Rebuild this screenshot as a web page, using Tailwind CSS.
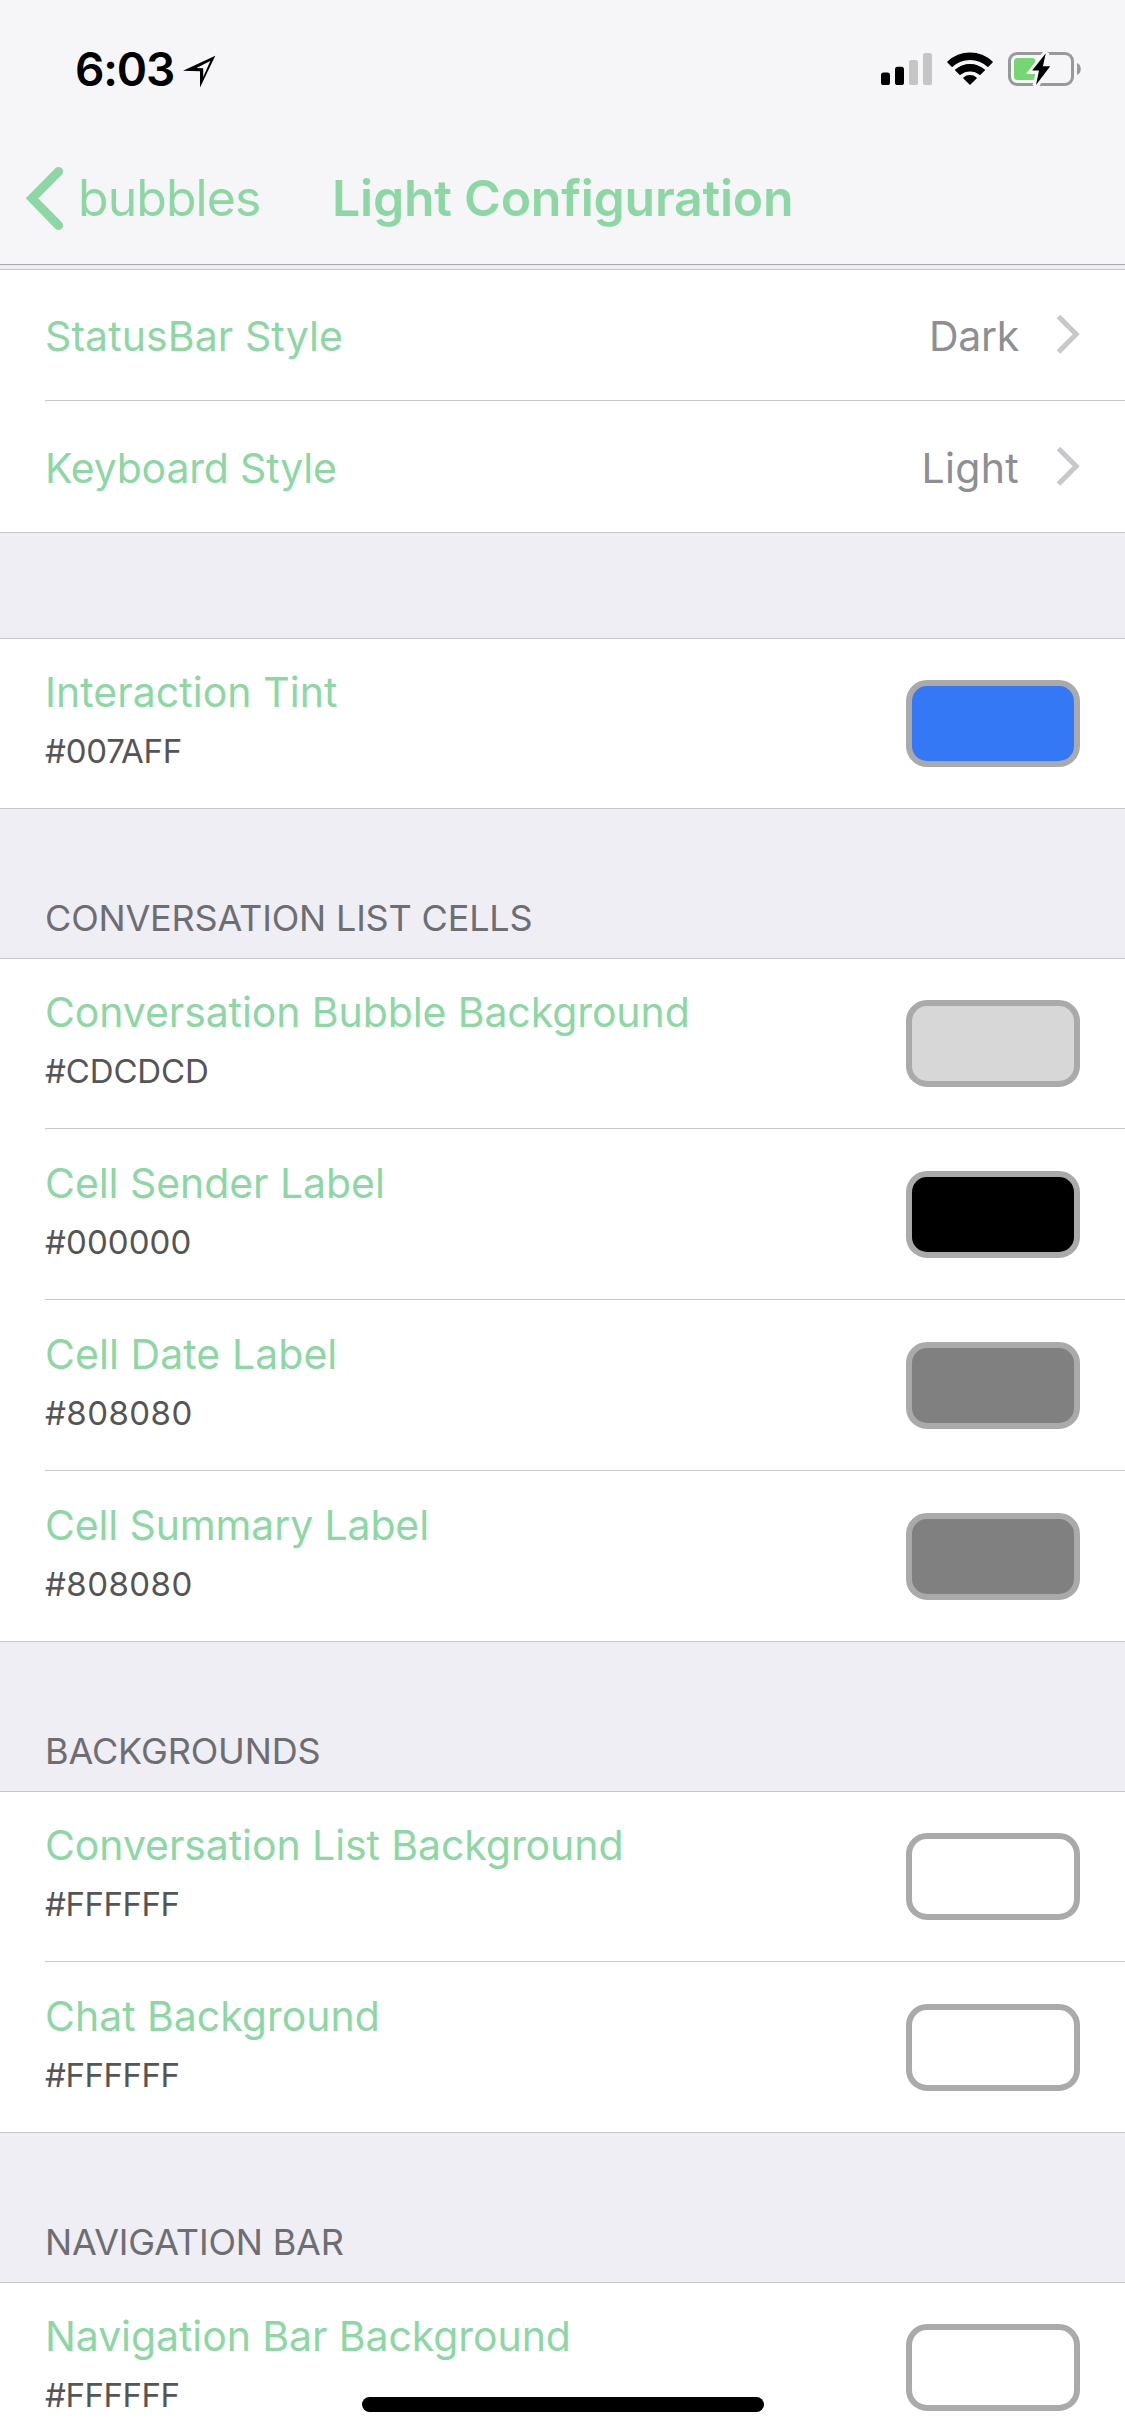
<!DOCTYPE html>
<html lang="en">
<head>
<meta charset="utf-8">
<meta name="viewport" content="width=device-width, initial-scale=1">
<title>Light Configuration</title>
<script src="https://cdn.jsdelivr.net/npm/@tailwindcss/browser@4"></script>
</head>
<body class="overflow-hidden bg-[#efeef4] font-[Inter,sans-serif]">
<div class="relative flex h-[2436px] w-[1125px] flex-col overflow-hidden whitespace-nowrap">

  <header class="flex h-[265px] shrink-0 flex-col border-b border-[#a9a9ad] bg-[#f6f6f8]">
    <!-- Status bar -->
    <div class="flex h-[132px] shrink-0 items-start justify-between pl-[75px] pr-[43px]">
      <div class="flex items-start pt-[39px]">
        <span class="w-[108px] text-[46px] font-semibold leading-[60px] tracking-[-1.15px] text-black">6:03</span>
        <svg class="mt-[16px] h-[33px] w-[33px]" viewBox="0 0 33 33" fill="#000"><path fill-rule="evenodd" d="M32.3 .8 0 15.8 17 16.200V32.600ZM27.300 6 13.500 13.100 20.200 13.300V22Z"/></svg>
      </div>
      <div class="flex items-start pt-[51px]">
        <svg class="h-[35px] w-[51px]" viewBox="0 0 51 35">
          <rect x="0" y="21.6" width="9" height="12.4" rx="2.6" fill="#000"/>
          <rect x="14" y="15.8" width="9" height="18.2" rx="2.6" fill="#000"/>
          <rect x="28" y="9" width="9" height="25" rx="2.6" fill="#c5c5c6"/>
          <rect x="42" y="2" width="9" height="32" rx="2.6" fill="#c5c5c6"/>
        </svg>
        <svg class="ml-[15px] h-[35px] w-[46px]" viewBox="0 0 46 35">
          <g fill="#000" stroke="#000" stroke-width="1.4" stroke-linejoin="round">
            <path d="M.9 11.1A31.9 31.9 0 0 1 45.100 11.100L40.900 15.300A26.100 26.100 0 0 0 5.100 15.300Z"/>
            <path d="M8.700 19A21.600 21.600 0 0 1 37.300 19L33 23.300A15.700 15.700 0 0 0 13 23.300Z"/>
            <path d="M16.900 27A9.400 9.400 0 0 1 29.100 27L23 33Z"/>
          </g>
        </svg>
        <svg class="ml-[14px] h-[36px] w-[75px]" viewBox="0 0 75 36">
          <rect x="2.500" y="2.500" width="63" height="31" rx="7.500" fill="none" stroke="#99999b" stroke-width="3"/>
          <path d="M70 12C75 13.500 75 22.500 70 24Z" fill="#99999b"/>
          <rect x="7" y="7" width="21.500" height="22" rx="3.500" fill="#76d672"/>
          <path d="M39.500 1.500 25 20H32L28.500 35 43.500 14.600H35.800Z" fill="#000" stroke="#f6f6f8" stroke-width="6"/>
          <path d="M38.800 2.200 25.200 19.500H32L29 34 43.200 15.200H35.900Z" fill="#000"/>
        </svg>
      </div>
    </div>
    <!-- Navigation bar -->
    <div class="flex h-[132px] shrink-0 items-start pl-[26px] text-[50px] leading-[60px] text-[#8cd7a3]">
      <svg class="mt-[34px] h-[65px] w-[52px]" viewBox="0 0 52 65" fill="none" stroke="currentColor" stroke-width="9" stroke-linecap="round"><path d="M32.600 5.500 6 32.300 32.600 59.500"/></svg>
      <span class="mt-[36px] w-[254px] tracking-[-0.95px]">bubbles</span>
      <h1 class="mt-[36px] font-semibold tracking-[-0.24px]">Light Configuration</h1>
    </div>
  </header>

  <main class="flex flex-col pt-1 text-[41px] leading-[50px] text-[#8cd7a3]">
    <section class="bg-white">
      <div class="-mb-px h-px bg-[#c8c7cc]"></div>
      <div class="pl-[45px]">
        <div class="flex h-[132px] items-center justify-between border-b border-[#c8c7cc] pr-[45px] pt-[3px]">
          <span class="tracking-[0.09px]">StatusBar Style</span>
          <span class="flex items-center tracking-[-0.3px] text-[#8e8e93]">Dark<svg class="-mt-[5px] ml-[36px] h-[40px] w-[25px]" viewBox="0 0 25 40" fill="none" stroke="#c7c7cc" stroke-width="5"><path d="M3.500 2.500 21.200 20.200 3.500 38"/></svg></span>
        </div>
      </div>
      <div class="flex h-[132px] items-center justify-between border-b border-[#c8c7cc] pl-[45px] pr-[45px] pt-[3px]">
        <span class="tracking-[-0.19px]">Keyboard Style</span>
        <span class="flex items-center tracking-[0.3px] text-[#8e8e93]">Light<svg class="-mt-[5px] ml-[36px] h-[40px] w-[25px]" viewBox="0 0 25 40" fill="none" stroke="#c7c7cc" stroke-width="5"><path d="M3.500 2.500 21.200 20.200 3.500 38"/></svg></span>
      </div>
    </section>

    <section class="mt-[105px] bg-white">
      <div class="-mb-px h-px bg-[#c8c7cc]"></div>
      <div class="flex h-[171px] items-start justify-between border-b border-[#c8c7cc] pl-[45px] pr-[45px]">
        <div class="flex flex-col gap-[14px] pt-[29px]">
          <span class="tracking-[0.04px]">Interaction Tint</span>
          <span class="text-[33px] leading-[40px] tracking-[-0.25px] text-[#555]">#007AFF</span>
        </div>
        <span class="mt-[42px] h-[87px] w-[174px] rounded-[21px] border-[6px] border-[#aaa] bg-[#3478f6]"></span>
      </div>
    </section>

    <h2 class="flex h-[149px] items-end pb-[15px] pl-[45px] text-[36px] tracking-[-0.17px] text-[#6d6d72]">CONVERSATION LIST CELLS</h2>
    <section class="bg-white">
      <div class="-mb-px h-px bg-[#c8c7cc]"></div>
      <div class="pl-[45px]">
        <div class="flex h-[171px] items-start justify-between border-b border-[#c8c7cc] pr-[45px]">
          <div class="flex flex-col gap-[14px] pt-[29px]">
            <span class="tracking-[-0.1px]">Conversation Bubble Background</span>
            <span class="text-[33px] leading-[40px] tracking-[-0.14px] text-[#555]">#CDCDCD</span>
          </div>
          <span class="mt-[42px] h-[87px] w-[174px] rounded-[21px] border-[6px] border-[#aaa] bg-[#d7d7d7]"></span>
        </div>
        <div class="flex h-[171px] items-start justify-between border-b border-[#c8c7cc] pr-[45px]">
          <div class="flex flex-col gap-[14px] pt-[29px]">
            <span class="tracking-[-0.06px]">Cell Sender Label</span>
            <span class="text-[33px] leading-[40px] tracking-[0.08px] text-[#555]">#000000</span>
          </div>
          <span class="mt-[42px] h-[87px] w-[174px] rounded-[21px] border-[6px] border-[#aaa] bg-black"></span>
        </div>
        <div class="flex h-[171px] items-start justify-between border-b border-[#c8c7cc] pr-[45px]">
          <div class="flex flex-col gap-[14px] pt-[29px]">
            <span class="tracking-[0.06px]">Cell Date Label</span>
            <span class="text-[33px] leading-[40px] tracking-[0.45px] text-[#555]">#808080</span>
          </div>
          <span class="mt-[42px] h-[87px] w-[174px] rounded-[21px] border-[6px] border-[#aaa] bg-[#808080]"></span>
        </div>
      </div>
      <div class="flex h-[171px] items-start justify-between border-b border-[#c8c7cc] pl-[45px] pr-[45px]">
        <div class="flex flex-col gap-[14px] pt-[29px]">
          <span class="tracking-[-0.14px]">Cell Summary Label</span>
          <span class="text-[33px] leading-[40px] tracking-[0.45px] text-[#555]">#808080</span>
        </div>
        <span class="mt-[42px] h-[87px] w-[174px] rounded-[21px] border-[6px] border-[#aaa] bg-[#808080]"></span>
      </div>
    </section>

    <h2 class="flex h-[149px] items-end pb-[15px] pl-[45px] text-[36px] tracking-[-0.13px] text-[#6d6d72]">BACKGROUNDS</h2>
    <section class="bg-white">
      <div class="-mb-px h-px bg-[#c8c7cc]"></div>
      <div class="pl-[45px]">
        <div class="flex h-[171px] items-start justify-between border-b border-[#c8c7cc] pr-[45px]">
          <div class="flex flex-col gap-[14px] pt-[29px]">
            <span class="tracking-[-0.08px]">Conversation List Background</span>
            <span class="text-[33px] leading-[40px] tracking-[-0.45px] text-[#555]">#FFFFFF</span>
          </div>
          <span class="mt-[42px] h-[87px] w-[174px] rounded-[21px] border-[6px] border-[#aaa] bg-white"></span>
        </div>
      </div>
      <div class="flex h-[171px] items-start justify-between border-b border-[#c8c7cc] pl-[45px] pr-[45px]">
        <div class="flex flex-col gap-[14px] pt-[29px]">
          <span class="tracking-[-0.02px]">Chat Background</span>
          <span class="text-[33px] leading-[40px] tracking-[-0.45px] text-[#555]">#FFFFFF</span>
        </div>
        <span class="mt-[42px] h-[87px] w-[174px] rounded-[21px] border-[6px] border-[#aaa] bg-white"></span>
      </div>
    </section>

    <h2 class="flex h-[149px] items-end pb-[15px] pl-[45px] text-[36px] tracking-[-0.17px] text-[#6d6d72]">NAVIGATION BAR</h2>
    <section class="bg-white">
      <div class="-mb-px h-px bg-[#c8c7cc]"></div>
      <div class="flex h-[171px] items-start justify-between pl-[45px] pr-[45px]">
        <div class="flex flex-col gap-[14px] pt-[29px]">
          <span class="tracking-[-0.08px]">Navigation Bar Background</span>
          <span class="text-[33px] leading-[40px] tracking-[-0.45px] text-[#555]">#FFFFFF</span>
        </div>
        <span class="mt-[42px] h-[87px] w-[174px] rounded-[21px] border-[6px] border-[#aaa] bg-white"></span>
      </div>
    </section>
  </main>

  <!-- Home indicator -->
  <div class="absolute bottom-[24px] left-[362px] h-[15px] w-[402px] rounded-full bg-black"></div>
</div>
</body>
</html>
